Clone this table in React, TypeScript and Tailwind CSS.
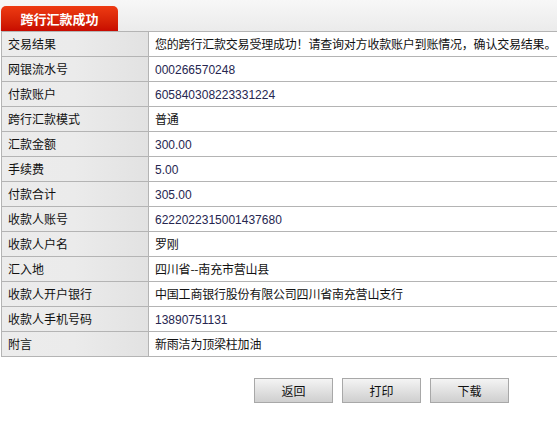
import React from "react";

const rows: { label: string; value: string; num?: boolean }[] = [
  { label: "交易结果", value: "您的跨行汇款交易受理成功！请查询对方收款账户到账情况，确认交易结果。" },
  { label: "网银流水号", value: "000266570248", num: true },
  { label: "付款账户", value: "605840308223331224", num: true },
  { label: "跨行汇款模式", value: "普通" },
  { label: "汇款金额", value: "300.00", num: true },
  { label: "手续费", value: "5.00", num: true },
  { label: "付款合计", value: "305.00", num: true },
  { label: "收款人账号", value: "6222022315001437680", num: true },
  { label: "收款人户名", value: "罗刚" },
  { label: "汇入地", value: "四川省--南充市营山县" },
  { label: "收款人开户银行", value: "中国工商银行股份有限公司四川省南充营山支行" },
  { label: "收款人手机号码", value: "13890751131", num: true },
  { label: "附言", value: "新雨洁为顶梁柱加油" },
];

const cjk = "font-['SimSun','Noto_Sans_CJK_SC',sans-serif]";

export default function App() {
  return (
    <div className={`w-[557px] h-[425px] bg-white text-[12px] text-[#111] ${cjk}`}>
      {/* Tab header */}
      <div className="h-[31px] flex items-end pl-[1px] bg-gradient-to-b from-[#f7f7f7] to-[#ebebeb]">
        <div className="h-[25px] w-[117px] rounded-t-[5px] bg-gradient-to-b from-[#ee3a12] to-[#c80a00] flex items-center justify-center text-white font-bold text-[13px]">
          跨行汇款成功
        </div>
      </div>

      {/* Detail table */}
      <div className="ml-[1px] border-t border-l border-[#b4b4b4]">
        {rows.map((r) => (
          <div key={r.label} className="flex h-[25px] border-b border-[#b4b4b4]">
            <div className="w-[147px] shrink-0 flex items-center pl-[6px] bg-gradient-to-r from-[#ececec] via-[#ebebeb] to-[#e2e2e2] border-r border-[#b4b4b4]">
              {r.label}
            </div>
            <div
              className={`flex-1 flex items-center pl-[6px] whitespace-nowrap ${
                r.num
                  ? "font-['Liberation_Sans',Arial,sans-serif] text-[#262650] pt-[2px]"
                  : "tracking-[-0.2px]"
              }`}
            >
              {r.value}
            </div>
          </div>
        ))}
      </div>

      {/* Buttons */}
      <div className="flex justify-end gap-[9px] pr-[48px] mt-[21px]">
        {["返回", "打印", "下载"].map((b) => (
          <button
            key={b}
            className="w-[79px] h-[25px] border border-[#a8a8a8] bg-gradient-to-b from-[#f4f4f4] to-[#cfcfcf] text-[12px] text-[#111] flex items-center justify-center"
          >
            {b}
          </button>
        ))}
      </div>
    </div>
  );
}
